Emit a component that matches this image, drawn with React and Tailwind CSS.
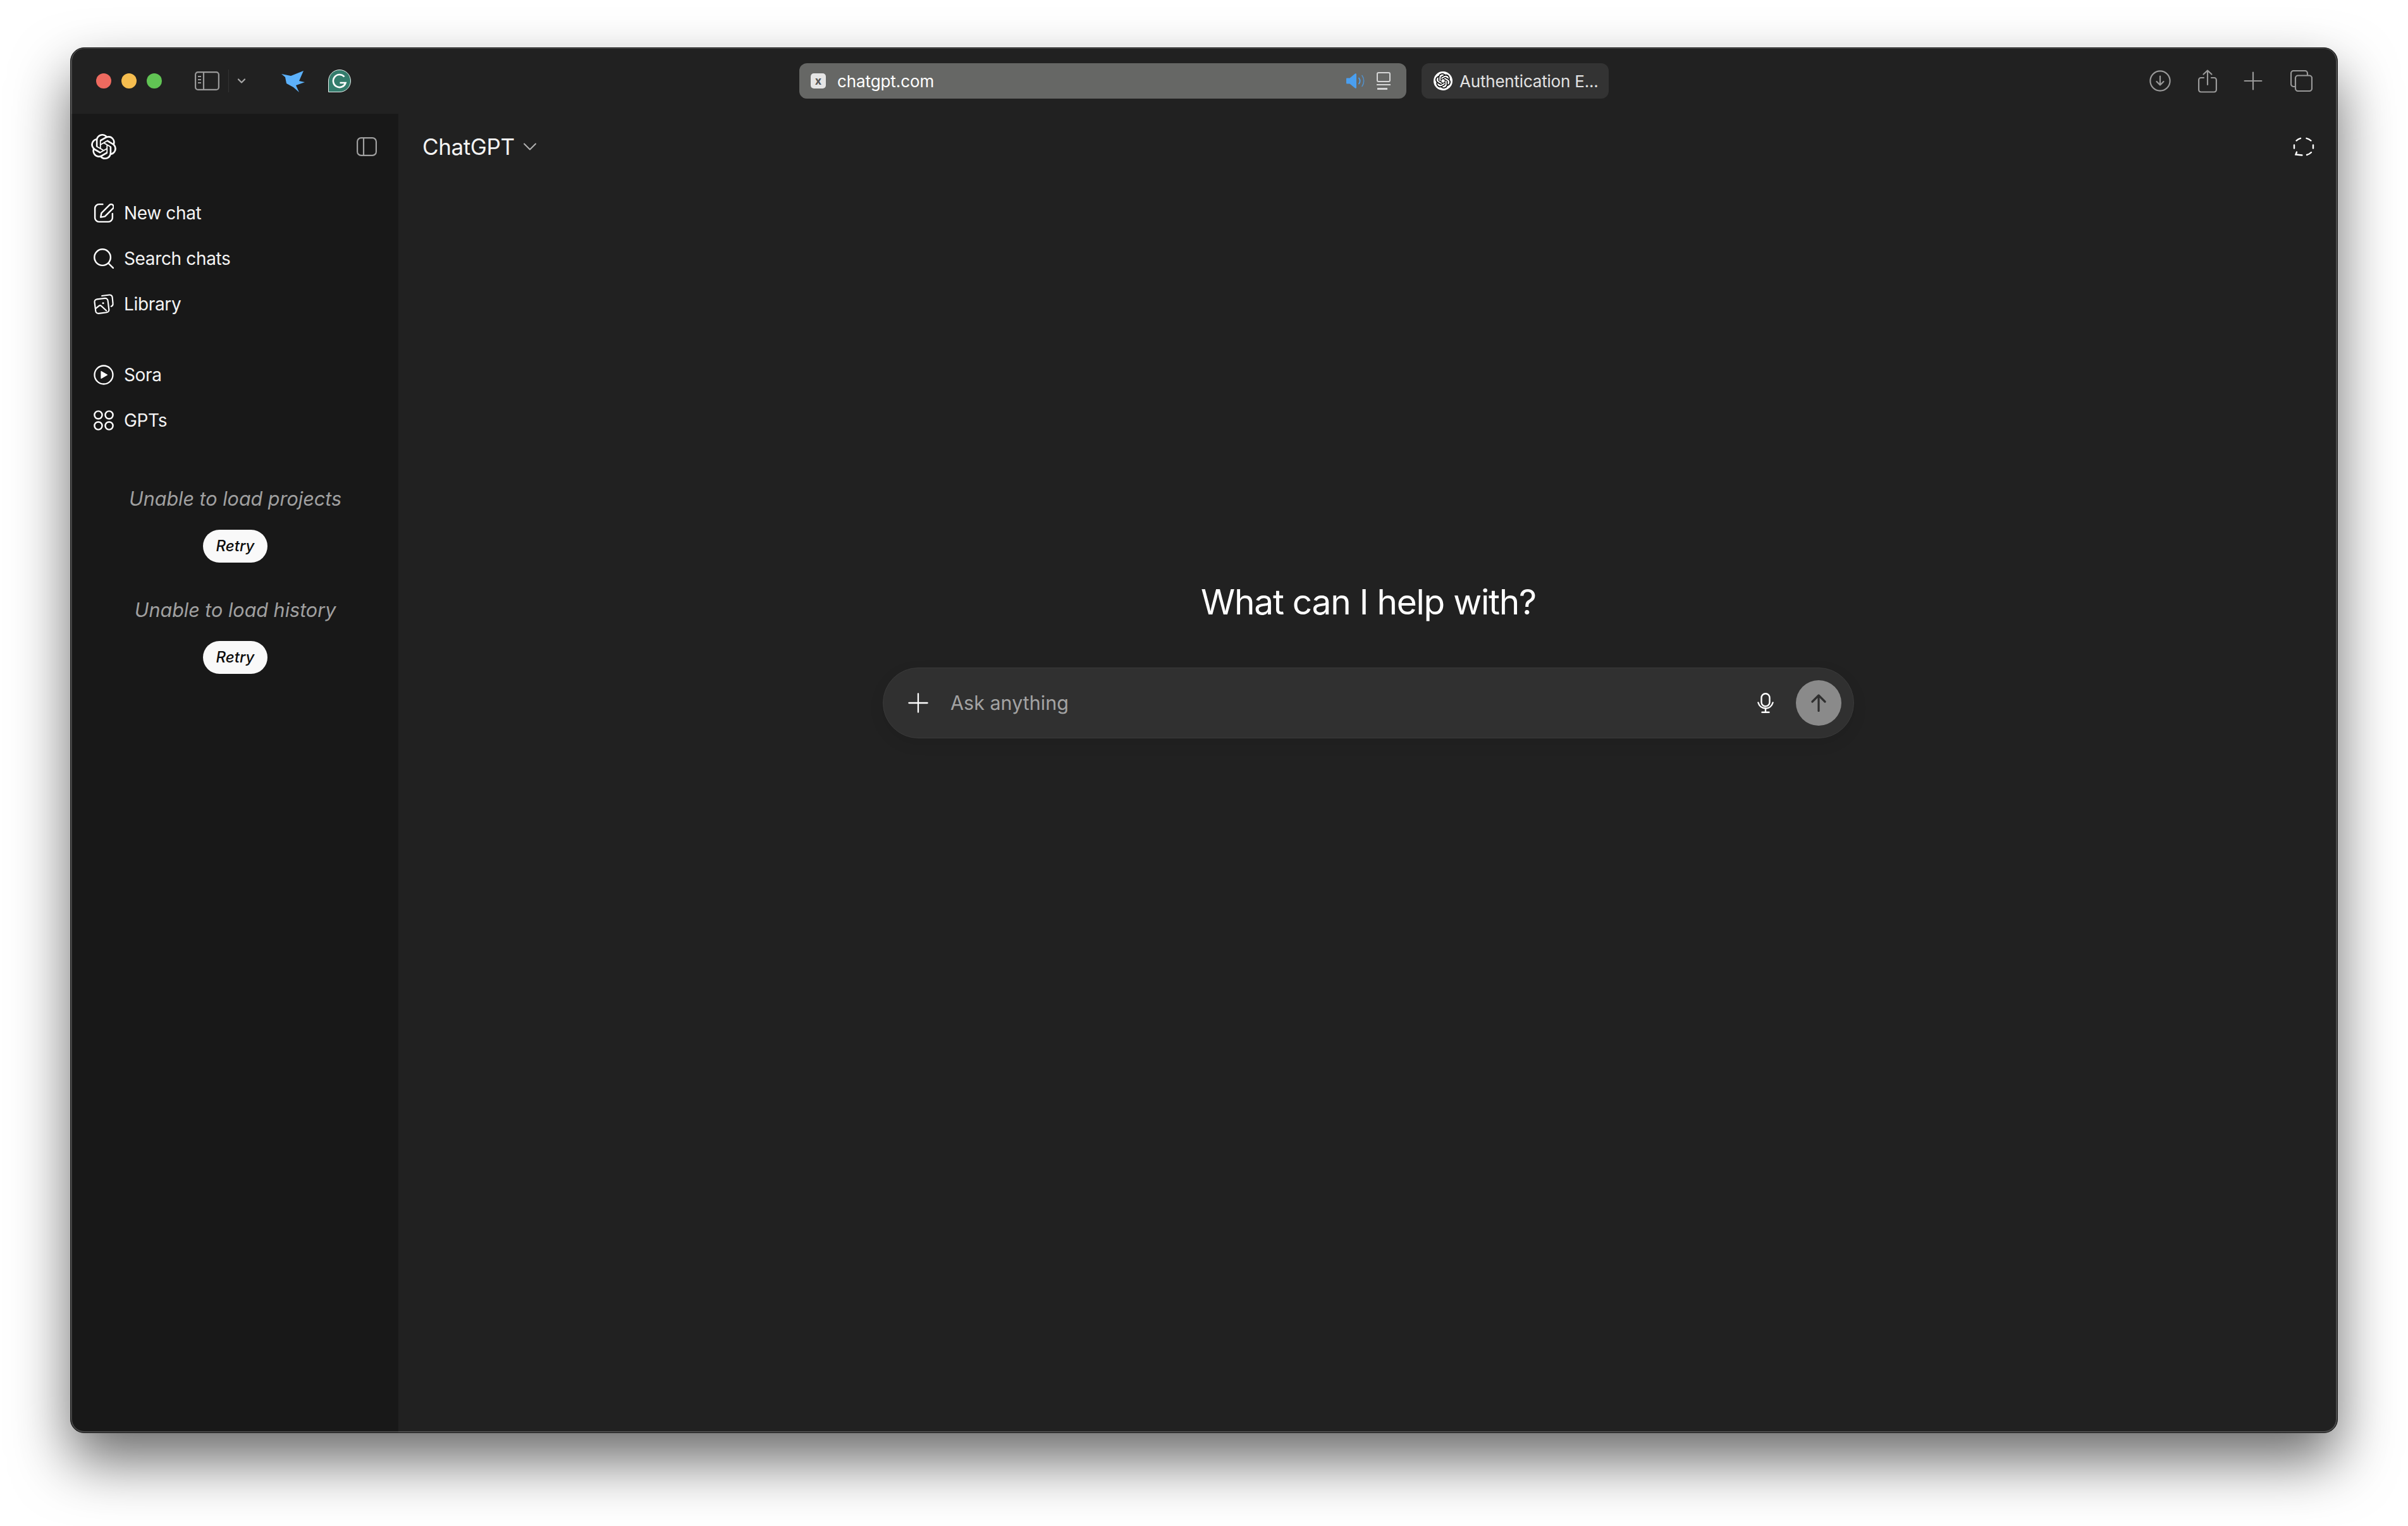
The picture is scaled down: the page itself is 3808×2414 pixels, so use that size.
import React from 'react';
import { ChevronDown, Plus } from 'lucide-react';

const OPENAI_PATH =
  'M22.2819 9.8211a5.9847 5.9847 0 0 0-.5157-4.9108 6.0462 6.0462 0 0 0-6.5098-2.9A6.0651 6.0651 0 0 0 4.9807 4.1818a5.9847 5.9847 0 0 0-3.9977 2.9 6.0462 6.0462 0 0 0 .7427 7.0966 5.98 5.98 0 0 0 .511 4.9107 6.051 6.051 0 0 0 6.5146 2.9001A5.9847 5.9847 0 0 0 13.2599 24a6.0557 6.0557 0 0 0 5.7718-4.2058 5.9894 5.9894 0 0 0 3.9977-2.9001 6.0557 6.0557 0 0 0-.7475-7.0729zm-9.022 12.6081a4.4755 4.4755 0 0 1-2.8764-1.0408l.1419-.0804 4.7783-2.7582a.7948.7948 0 0 0 .3927-.6813v-6.7369l2.02 1.1686a.071.071 0 0 1 .038.052v5.5826a4.504 4.504 0 0 1-4.4945 4.4944zm-9.6607-4.1254a4.4708 4.4708 0 0 1-.5346-3.0137l.142.0852 4.783 2.7582a.7712.7712 0 0 0 .7806 0l5.8428-3.3685v2.3324a.0804.0804 0 0 1-.0332.0615L9.74 19.9502a4.4992 4.4992 0 0 1-6.1408-1.6464zM2.3408 7.8956a4.485 4.485 0 0 1 2.3655-1.9728V11.6a.7664.7664 0 0 0 .3879.6765l5.8144 3.3543-2.0201 1.1685a.0757.0757 0 0 1-.071 0l-4.8303-2.7865A4.504 4.504 0 0 1 2.3408 7.872zm16.5963 3.8558L13.1038 8.364 15.1192 7.2a.0757.0757 0 0 1 .071 0l4.8303 2.7913a4.4944 4.4944 0 0 1-.6765 8.1042v-5.6772a.79.79 0 0 0-.407-.667zm2.0107-3.0231l-.142-.0852-4.7735-2.7818a.7759.7759 0 0 0-.7854 0L9.409 9.2297V6.8974a.0662.0662 0 0 1 .0284-.0615l4.8303-2.7866a4.4992 4.4992 0 0 1 6.6802 4.66zM8.3065 12.863l-2.02-1.1638a.0804.0804 0 0 1-.038-.0567V6.0742a4.4992 4.4992 0 0 1 7.3757-3.4537l-.142.0805L8.704 5.459a.7948.7948 0 0 0-.3927.6813zm1.0976-2.3654l2.602-1.4998 2.6069 1.4998v2.9994l-2.5974 1.4997-2.6067-1.4997Z';

const OpenAiLogo = ({ className }) => (
  <svg viewBox="0 0 24 24" fill="currentColor" className={className}>
    <path d={OPENAI_PATH} />
  </svg>
);

const NewChatIcon = ({ className }) => (
  <svg viewBox="0 0 30 30" fill="none" stroke="currentColor" strokeWidth="2.3" strokeLinecap="round" strokeLinejoin="round" className={className}>
    <path d="M13.5 2H8a6 6 0 0 0-6 6v14a6 6 0 0 0 6 6h14a6 6 0 0 0 6-6v-6" />
    <path d="M23.5 3.2a3.6 3.6 0 0 1 5.1 5.1L16.8 20l-6.3 1.2 1.2-6.2z" />
  </svg>
);

const SearchIcon = ({ className }) => (
  <svg viewBox="0 0 30 30" fill="none" stroke="currentColor" strokeWidth="2.3" strokeLinecap="round" className={className}>
    <circle cx="13.2" cy="13.2" r="12" />
    <path d="M22.5 22.5 29 29" />
  </svg>
);

const LibraryIcon = ({ className }) => (
  <svg viewBox="0 0 34 34" fill="none" stroke="currentColor" strokeWidth="2.3" strokeLinecap="round" strokeLinejoin="round" className={className}>
    <rect x="2.5" y="8" width="22.5" height="24" rx="4.5" transform="rotate(-7 14 20)" />
    <path d="M14 3.2 26.5 1.6a4.5 4.5 0 0 1 5 4l1 10.5a4.5 4.5 0 0 1-3 4.8" />
    <circle cx="16" cy="15.5" r="1.6" fill="currentColor" stroke="none" />
    <path d="M3.5 24.5 9 20c1.5-1 2.5-1 4 .2l8.5 8" />
  </svg>
);

const SoraIcon = ({ className }) => (
  <svg viewBox="0 0 32 32" fill="none" stroke="currentColor" strokeWidth="2.3" className={className}>
    <circle cx="16" cy="16" r="14.5" />
    <path d="M12 10.5v11l9.5-5.5z" fill="currentColor" strokeWidth="1.2" strokeLinejoin="round" />
  </svg>
);

const GptsIcon = ({ className }) => (
  <svg viewBox="0 0 30 30" fill="none" stroke="currentColor" strokeWidth="2.3" className={className}>
    <circle cx="7" cy="7" r="5.7" />
    <circle cx="23" cy="7" r="5.7" />
    <circle cx="7" cy="23" r="5.7" />
    <circle cx="23" cy="23" r="5.7" />
  </svg>
);

const MicIcon = ({ className }) => (
  <svg viewBox="0 0 26 32" fill="none" stroke="currentColor" strokeWidth="2.4" strokeLinecap="round" className={className}>
    <rect x="6.5" y="1.2" width="13" height="20" rx="6.5" />
    <path d="M1.4 15.5C3 21 7.5 24.5 13 24.5s10-3.5 11.6-9" />
    <path d="M13 25v5.5M7.5 30.8h11" />
  </svg>
);

const SendArrow = ({ className }) => (
  <svg viewBox="0 0 24 28" fill="none" stroke="currentColor" strokeWidth="3.2" strokeLinecap="round" strokeLinejoin="round" className={className}>
    <path d="M12 26.5V2M2 12 12 2l10 10" />
  </svg>
);

const SafariSidebarIcon = ({ className }) => (
  <svg viewBox="0 0 39 30" fill="none" stroke="currentColor" strokeWidth="2.2" className={className}>
    <rect x="1.1" y="1.1" width="36.8" height="27.8" rx="4" />
    <path d="M14 1v28" />
    <path d="M5 8h5M5 13h5M5 18h5" strokeWidth="1.8" />
  </svg>
);

const PanelIcon = ({ className }) => (
  <svg viewBox="0 0 32 30" fill="none" stroke="currentColor" strokeWidth="2.2" className={className}>
    <rect x="1.1" y="1.1" width="29.8" height="27.8" rx="6" />
    <path d="M11 1v28" />
  </svg>
);

const Bird = ({ className }) => (
  <svg viewBox="0 0 38 35" fill="#5cb1fb" className={className}>
    <path d="M0 6 L15 9 L35 1 L28 17 L37 19 L23 24 L28 35 L19 27 L8 21 L6 11 Z" />
  </svg>
);

const Grammarly = ({ className }) => (
  <svg viewBox="0 0 36 36" className={className}>
    <path d="M18 .5a17.5 17.5 0 0 1 0 35H.5V18A17.5 17.5 0 0 1 18 .5z" fill="#347c6c" stroke="#e8efed" strokeWidth="1" />
    <path d="M25.5 11.5a10 10 0 1 0 2 9.5h-9" fill="none" stroke="#fff" strokeWidth="2.6" />
  </svg>
);

const DownloadIcon = ({ className }) => (
  <svg viewBox="0 0 34 34" fill="none" stroke="currentColor" strokeWidth="2.2" strokeLinecap="round" strokeLinejoin="round" className={className}>
    <circle cx="17" cy="17" r="15.6" />
    <path d="M17 9.5v14M11.5 18l5.5 5.5 5.5-5.5" />
  </svg>
);

const ShareIcon = ({ className }) => (
  <svg viewBox="0 0 30 37" fill="none" stroke="currentColor" strokeWidth="2.2" strokeLinecap="round" strokeLinejoin="round" className={className}>
    <path d="M9 13H4.5a3.4 3.4 0 0 0-3.4 3.4v15.7a3.4 3.4 0 0 0 3.4 3.4h21a3.4 3.4 0 0 0 3.4-3.4V16.4a3.4 3.4 0 0 0-3.4-3.4H21" />
    <path d="M15 24V1.5M8.5 7.5 15 1.5l6.5 6" />
  </svg>
);

const TabsIcon = ({ className }) => (
  <svg viewBox="0 0 35 34" fill="none" stroke="currentColor" strokeWidth="2.2" className={className}>
    <path d="M7.5 26H5a4 4 0 0 1-4-4V5a4 4 0 0 1 4-4h18a4 4 0 0 1 4 4v3" />
    <rect x="8" y="8.5" width="26" height="24.5" rx="4" />
  </svg>
);

const TempChatIcon = ({ className }) => (
  <svg viewBox="0 0 34 30" fill="none" stroke="currentColor" strokeWidth="2.4" strokeLinecap="round" className={className}>
    <path d="M5.5 5.5A14.5 14.5 0 0 1 12 1.8" />
    <path d="M21.5 1.8A14.5 14.5 0 0 1 28.5 5.5" />
    <path d="M32 12.5v5" />
    <path d="M29 24a15 15 0 0 1-7 4" />
    <path d="M14.5 28.5 4.5 27.5 6 23.5" />
    <path d="M2 17.5v-5" />
  </svg>
);

const SpeakerIcon = ({ className }) => (
  <svg viewBox="0 0 29 24" className={className}>
    <path d="M1 7.5h4.5L14 .5c1-.6 2 0 2 1v21c0 1-1 1.6-2 1l-8.5-7H1a1 1 0 0 1-1-1v-7a1 1 0 0 1 1-1z" fill="#4a9ff0" />
    <path d="M20 7.5c2.2 3 2.2 6 0 9" fill="none" stroke="#4a9ff0" strokeWidth="1.8" strokeLinecap="round" />
    <path d="M25 3.5c3.6 5 3.6 12 0 17" fill="none" stroke="#4a9ff0" strokeWidth="1.6" strokeLinecap="round" opacity="0.7" />
  </svg>
);

const ScreenIcon = ({ className }) => (
  <svg viewBox="0 0 24 28" fill="none" stroke="#d6d6d6" strokeWidth="2" className={className}>
    <rect x="2" y="1" width="20" height="14" rx="2" />
    <path d="M1 20h22" />
    <path d="M2 26.5h16" strokeWidth="3" />
  </svg>
);

const navTop = [
  { label: 'New chat', icon: NewChatIcon },
  { label: 'Search chats', icon: SearchIcon },
  { label: 'Library', icon: LibraryIcon },
];

const navBottom = [
  { label: 'Sora', icon: SoraIcon },
  { label: 'GPTs', icon: GptsIcon },
];

const NavItem = ({ label, icon: Icon }) => (
  <div className="flex h-[72px] items-center gap-[16px] pl-[36px]">
    <Icon className="h-8 w-8 text-white" />
    <span className="text-[28px] tracking-[-0.35px] text-[#f4f4f4]">{label}</span>
  </div>
);

const RetryBlock = ({ text, className }) => (
  <div className={`flex flex-col items-center pl-[2px] ${className}`}>
    <p className="text-[30.5px] leading-[48px] text-[#a0a0a0] italic">{text}</p>
    <button className="mt-[25px] h-[52px] w-[102px] rounded-full bg-[#f9f9f9] text-[24px] font-medium text-[#0d0d0d] italic">
      Retry
    </button>
  </div>
);

export default function App() {
  return (
    <div className="h-[2414px] w-[3808px] overflow-hidden bg-white pt-[75px] pl-[111px] font-['Inter',sans-serif]">
      <div className="relative flex h-[2192px] w-[3586px] flex-col overflow-hidden rounded-[22px] border border-[#161616] bg-[#212121] shadow-[0_44px_90px_rgba(0,0,0,0.58)]">
        {/* Browser toolbar */}
        <div className="flex h-[104px] flex-none items-center pr-[39px] pl-[40px]">
          <div className="flex gap-4">
            <div className="h-6 w-6 rounded-full bg-[#ee6a5f]" />
            <div className="h-6 w-6 rounded-full bg-[#f5bd4f]" />
            <div className="h-6 w-6 rounded-full bg-[#61c454]" />
          </div>
          <SafariSidebarIcon className="ml-[52px] h-[30px] w-[39px] text-[#9a9a9a]" />
          <div className="ml-[14px] h-9 w-px bg-[#333333]" />
          <ChevronDown className="ml-[10px] h-5 w-5 text-[#a8a8a8]" strokeWidth={2.6} />
          <Bird className="ml-[53px] h-[35px] w-[38px]" />
          <Grammarly className="ml-9 h-9 w-9" />

          <div className="ml-[709px] flex h-14 w-[960px] items-center rounded-xl bg-[#666765] pr-6 pl-[18px]">
            <div className="flex h-6 w-6 items-center justify-center rounded-[5px] bg-[#e5e5e5] text-[18px] leading-none font-bold text-[#555555]">
              x
            </div>
            <span className="ml-[18px] text-[26px] tracking-[-0.1px] text-white">chatgpt.com</span>
            <SpeakerIcon className="ml-auto h-6 w-[29px]" />
            <ScreenIcon className="ml-[18px] h-7 w-6" />
          </div>
          <div className="ml-6 flex h-14 w-[296px] items-center rounded-xl bg-[#333333] pl-[19px]">
            <div className="flex h-[30px] w-[30px] items-center justify-center rounded-full bg-white">
              <OpenAiLogo className="h-6 w-6 text-black" />
            </div>
            <span className="ml-[11px] text-[26px] tracking-[-0.2px] whitespace-nowrap text-[#e2e2e2]">Authentication E...</span>
          </div>

          <div className="ml-auto flex items-center text-[#999999]">
            <DownloadIcon className="h-[34px] w-[34px]" />
            <ShareIcon className="ml-[43px] h-[37px] w-[30px]" />
            <Plus className="ml-[34px] h-[46px] w-[46px]" strokeWidth={1.15} />
            <TabsIcon className="ml-[36px] h-[34px] w-[35px]" />
          </div>
        </div>

        <div className="flex min-h-0 flex-1">
          {/* Sidebar */}
          <aside className="w-[518px] flex-none bg-[#181818]">
            <div className="flex h-[104px] items-center justify-between pr-[34px] pl-8">
              <OpenAiLogo className="h-10 w-10 text-white" />
              <PanelIcon className="h-[30px] w-8 text-[#a0a0a0]" />
            </div>
            <nav className="pt-[17px]">
              {navTop.map((item) => (
                <NavItem key={item.label} {...item} />
              ))}
              <div className="h-10" />
              {navBottom.map((item) => (
                <NavItem key={item.label} {...item} />
              ))}
            </nav>
            <RetryBlock text="Unable to load projects" className="mt-16" />
            <RetryBlock text="Unable to load history" className="mt-[51px]" />
          </aside>

          {/* Main */}
          <main className="flex min-w-0 flex-1 flex-col">
            <div className="flex h-[104px] flex-none items-center justify-between pr-9 pl-[38px]">
              <div className="flex items-center gap-[6px]">
                <span className="text-[35px] tracking-[-0.4px] text-[#f4f4f4]">ChatGPT</span>
                <ChevronDown className="h-9 w-9 text-[#b4b4b4]" strokeWidth={1.3} />
              </div>
              <TempChatIcon className="h-[30px] w-[34px] text-white" />
            </div>
            <div className="flex flex-col items-center pt-[628px] pl-[2px]">
              <h1 className="text-[55px] leading-[80px] font-[370] tracking-[-1.25px] text-white">What can I help with?</h1>
              <div className="mt-16 flex h-[112px] w-[1536px] items-center rounded-full border border-[#3a3a3a] bg-[#303030] pr-[19px] pl-[30px] shadow-[0_8px_24px_rgba(0,0,0,0.08)]">
                <Plus className="h-[50px] w-[50px] text-white" strokeWidth={1.1} />
                <span className="ml-[26px] flex-1 text-[30.5px] text-[#a3a3a3]">Ask anything</span>
                <MicIcon className="h-8 w-[26px] text-white" />
                <div className="ml-[35px] flex h-[72px] w-[72px] items-center justify-center rounded-full bg-[#8a8a8a]">
                  <SendArrow className="h-7 w-6 text-[#2f2f2f]" />
                </div>
              </div>
            </div>
          </main>
        </div>

        {/* Window edge highlight */}
        <div className="pointer-events-none absolute inset-0 rounded-[21px] border-2 border-t border-white/20" />
      </div>
    </div>
  );
}
